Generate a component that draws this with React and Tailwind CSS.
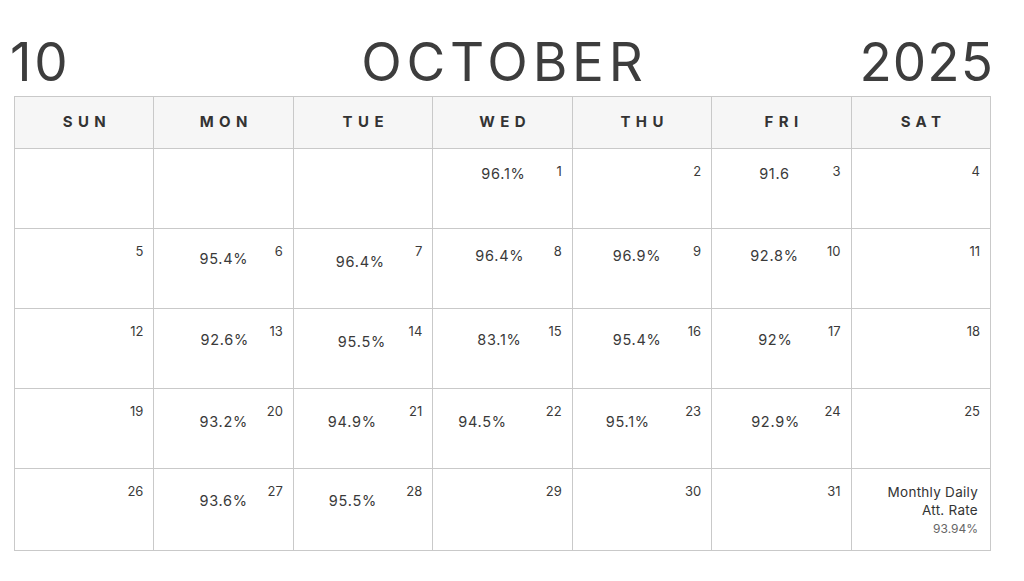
import React from 'react';

const font = { fontFamily: 'Inter, "Open Sans", sans-serif' };

const days = ['SUN', 'MON', 'TUE', 'WED', 'THU', 'FRI', 'SAT'];

// each cell: day number, attendance rate and where the rate sits inside the cell [x, y]
const weeks = [
  [null, null, null, { d: 1, p: '96.1%', at: [48, 16] }, { d: 2 }, { d: 3, p: '91.6', at: [47, 16] }, { d: 4 }],
  [
    { d: 5 },
    { d: 6, p: '95.4%', at: [45, 21] },
    { d: 7, p: '96.4%', at: [42, 24] },
    { d: 8, p: '96.4%', at: [42, 18] },
    { d: 9, p: '96.9%', at: [40, 18] },
    { d: 10, p: '92.8%', at: [38, 18] },
    { d: 11 },
  ],
  [
    { d: 12 },
    { d: 13, p: '92.6%', at: [46, 22] },
    { d: 14, p: '95.5%', at: [44, 24] },
    { d: 15, p: '83.1%', at: [44, 22] },
    { d: 16, p: '95.4%', at: [40, 22] },
    { d: 17, p: '92%', at: [46, 22] },
    { d: 18 },
  ],
  [
    { d: 19 },
    { d: 20, p: '93.2%', at: [45, 24] },
    { d: 21, p: '94.9%', at: [34, 24] },
    { d: 22, p: '94.5%', at: [25, 24] },
    { d: 23, p: '95.1%', at: [33, 24] },
    { d: 24, p: '92.9%', at: [39, 24] },
    { d: 25 },
  ],
  [
    { d: 26 },
    { d: 27, p: '93.6%', at: [45, 23] },
    { d: 28, p: '95.5%', at: [35, 23] },
    { d: 29 },
    { d: 30 },
    { d: 31 },
    { summary: true },
  ],
];

const Cell = ({ cell, last }) => {
  const h = last ? 'h-[82px]' : 'h-[80px]';
  if (!cell) return <div className={`${h} border-r border-b border-[#c9c9c9]`} />;

  if (cell.summary) {
    return (
      <div className={`${h} border-r border-b border-[#c9c9c9] flex flex-col items-end pt-[14px] pr-[12px] text-right`}>
        <div className="text-[13.5px] leading-[18px] tracking-[0.02em] text-[#333]">Monthly Daily</div>
        <div className="text-[13.5px] leading-[18px] tracking-[0.02em] text-[#333]">Att. Rate</div>
        <div className="text-[12px] leading-[20px] text-[#666]">93.94%</div>
      </div>
    );
  }

  return (
    <div className={`${h} border-r border-b border-[#c9c9c9] flex items-start`}>
      {cell.p && (
        <span
          className="text-[14.5px] leading-[18px] tracking-[0.05em] text-[#3a3a3a]"
          style={{ marginLeft: cell.at[0], marginTop: cell.at[1] }}
        >
          {cell.p}
        </span>
      )}
      <span className="ml-auto mt-[13px] mr-[10px] text-[13px] leading-[18px] text-[#3a3a3a]">{cell.d}</span>
    </div>
  );
};

const App = () => {
  return (
    <div className="w-[1024px] h-[581px] bg-white" style={font}>
      <div className="pt-[28px] pb-[2px] mx-[10px] w-[984px] h-[96px] grid grid-cols-[1fr_auto_1fr] items-end text-[#3d3d3d]">
        <div className="text-[53px] leading-[64px] tracking-[0.05em]">10</div>
        <div className="text-[53px] leading-[64px] tracking-[0.09em] pl-[0.09em]">OCTOBER</div>
        <div className="text-[53px] leading-[64px] tracking-[0.02em] text-right">2025</div>
      </div>

      <div className="ml-[14px] w-[977px] grid grid-cols-7 border-l border-t border-[#c9c9c9]">
        {days.map((d) => (
          <div
            key={d}
            className="h-[52px] bg-[#f6f6f6] border-r border-b border-[#c9c9c9] flex items-center justify-center pl-[0.36em] text-[15px] font-bold tracking-[0.36em] text-[#333]"
          >
            {d}
          </div>
        ))}
        {weeks.map((w, wi) =>
          w.map((c, ci) => <Cell key={`${wi}-${ci}`} cell={c} last={wi === weeks.length - 1} />)
        )}
      </div>
    </div>
  );
};

export default App;
